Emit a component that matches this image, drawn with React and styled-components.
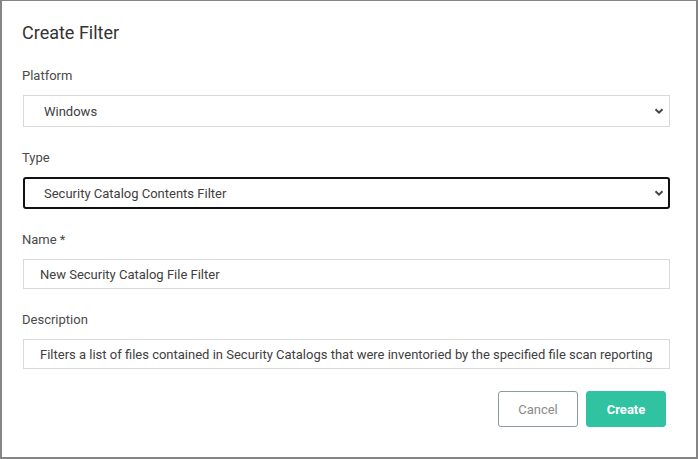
import React from 'react';
import styled, { createGlobalStyle } from 'styled-components';

const GlobalStyle = createGlobalStyle`
    html, body {
        margin: 0;
        padding: 0;
        background: #ffffff;
    }
    body {
        font-family: Roboto, "Liberation Sans", Arial, sans-serif;
    }
`;

const Frame = styled.div`
    box-sizing: border-box;
    width: 698px;
    height: 459px;
    border: 2px solid #858585;
    border-top-width: 1px;
    background: #ffffff;
    padding: 21px 26px 0 20px;
`;

const Title = styled.h2`
    margin: 0 0 24px 0;
    font-size: 18px;
    line-height: 22px;
    font-weight: 400;
    color: #333333;
`;

const Field = styled.div`
    display: flex;
    flex-direction: column;
    margin-bottom: ${(p) => (p.$last ? '22px' : '23px')};
`;

const Label = styled.label`
    margin: 0 0 11px 0;
    font-size: 13px;
    line-height: 16px;
    color: #4a4a4a;
`;

const SelectWrap = styled.div`
    position: relative;
    margin-left: 1px;
`;

const Select = styled.select`
    box-sizing: border-box;
    width: 100%;
    height: 32px;
    appearance: none;
    -webkit-appearance: none;
    border: ${(p) => (p.$focused ? '2px solid #111111' : '1px solid #d9d9d9')};
    border-radius: ${(p) => (p.$focused ? '3px' : '0')};
    background: #ffffff;
    padding: 0 0 0 ${(p) => (p.$focused ? '19px' : '20px')};
    font-family: Roboto, "Liberation Sans", Arial, sans-serif;
    font-size: 13px;
    color: #404040;
    outline: none;
`;

const Chevron = styled.svg`
    position: absolute;
    right: 5px;
    top: 50%;
    transform: translateY(-50%);
    pointer-events: none;
`;

const Input = styled.input`
    box-sizing: border-box;
    width: calc(100% - 1px);
    margin-left: 1px;
    height: 30px;
    border: 1px solid #d9d9d9;
    padding: 0 0 0 16px;
    font-family: Roboto, "Liberation Sans", Arial, sans-serif;
    font-size: 13px;
    color: #404040;
    outline: none;
`;

const Actions = styled.div`
    display: flex;
    justify-content: flex-end;
    gap: 8px;
    margin-right: 4px;
`;

const Button = styled.button`
    box-sizing: border-box;
    width: 80px;
    height: 36px;
    border-radius: 3px;
    border: 1px solid ${(p) => (p.$primary ? '#2fc3a1' : '#8e9aa2')};
    background: ${(p) => (p.$primary ? '#2fc3a1' : '#ffffff')};
    color: ${(p) => (p.$primary ? '#ffffff' : '#8a8a8a')};
    font-family: Roboto, "Liberation Sans", Arial, sans-serif;
    font-size: 13px;
    font-weight: ${(p) => (p.$primary ? 700 : 400)};
    cursor: pointer;
`;

const ChevronIcon = () => (
    <Chevron width="12" height="12" viewBox="0 0 12 12">
        <path d="M2.5 4.2 L6 7.6 L9.5 4.2" fill="none" stroke="#444" strokeWidth="2" />
    </Chevron>
);

export default function App() {
    return (
        <>
            <GlobalStyle />
            <Frame>
                <Title>Create Filter</Title>
                <Field>
                    <Label>Platform</Label>
                    <SelectWrap>
                        <Select defaultValue="windows">
                            <option value="windows">Windows</option>
                        </Select>
                        <ChevronIcon />
                    </SelectWrap>
                </Field>
                <Field>
                    <Label>Type</Label>
                    <SelectWrap>
                        <Select $focused defaultValue="catalog">
                            <option value="catalog">Security Catalog Contents Filter</option>
                        </Select>
                        <ChevronIcon />
                    </SelectWrap>
                </Field>
                <Field>
                    <Label>Name *</Label>
                    <Input defaultValue="New Security Catalog File Filter" />
                </Field>
                <Field $last>
                    <Label>Description</Label>
                    <Input defaultValue="Filters a list of files contained in Security Catalogs that were inventoried by the specified file scan reporting" />
                </Field>
                <Actions>
                    <Button>Cancel</Button>
                    <Button $primary>Create</Button>
                </Actions>
            </Frame>
        </>
    );
}
